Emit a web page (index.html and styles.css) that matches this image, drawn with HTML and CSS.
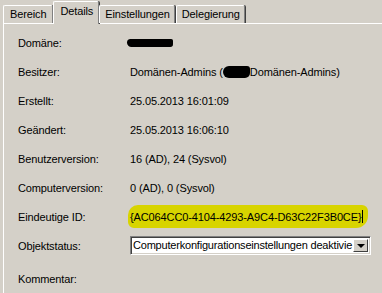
FILE: index.html
```html
<!DOCTYPE html>
<html lang="de">
<head>
    <meta charset="UTF-8">
    <title>Details</title>
    <link rel="stylesheet" href="styles.css">
</head>
<body>
    <div class="tabs">
        <div class="tab tab-first">Bereich</div>
        <div class="tab active">Details</div>
        <div class="tab">Einstellungen</div>
        <div class="tab">Delegierung</div>
    </div>
    <div class="panel">
        <div class="row">
            <span class="label">Domäne:</span>
            <span class="value"><span class="blot blot-domain"></span></span>
        </div>
        <div class="row">
            <span class="label">Besitzer:</span>
            <span class="value">Domänen-Admins (<span class="blot blot-owner"></span>Domänen-Admins)</span>
        </div>
        <div class="row">
            <span class="label">Erstellt:</span>
            <span class="value">25.05.2013 16:01:09</span>
        </div>
        <div class="row">
            <span class="label">Geändert:</span>
            <span class="value">25.05.2013 16:06:10</span>
        </div>
        <div class="row">
            <span class="label">Benutzerversion:</span>
            <span class="value">16 (AD), 24 (Sysvol)</span>
        </div>
        <div class="row">
            <span class="label">Computerversion:</span>
            <span class="value">0 (AD), 0 (Sysvol)</span>
        </div>
        <div class="row">
            <span class="label">Eindeutige ID:</span>
            <span class="value"><span class="marker">{AC064CC0-4104-4293-A9C4-D63C22F3B0CE}<span class="caret"></span></span></span>
        </div>
        <div class="row">
            <span class="label">Objektstatus:</span>
            <span class="value">
                <span class="select">
                    <span class="select-text">Computerkonfigurationseinstellungen deaktivie</span>
                    <span class="select-btn"><span class="arrow"></span></span>
                </span>
            </span>
        </div>
        <div class="row row-last">
            <span class="label">Kommentar:</span>
            <span class="value"></span>
        </div>
    </div>
</body>
</html>
```

FILE: styles.css
```css
body {
    margin: 0;
    background-color: #d4d0c8;
    font-family: Tahoma, "Liberation Sans", Arial, sans-serif;
    font-size: 11px;
    letter-spacing: -0.12px;
    color: #000000;
    height: 293px;
    overflow: hidden;
}
.tabs {
    display: flex;
    align-items: flex-end;
    height: 23px;
    padding-left: 3px;
    position: relative;
    z-index: 1;
}
.tab {
    height: 17px;
    line-height: 16px;
    padding: 0 4px 0 5px;
    border-top: 1px solid #ffffff;
    border-left: 1px solid #ffffff;
    border-right: 1px solid #808080;
    box-shadow: 1px 0 0 #404040;
    border-radius: 2px 2px 0 0;
    margin-right: 1px;
    background-color: #d4d0c8;
}
.tab-first {
    padding: 0 6px 0 6px;
}
.tab.active {
    height: 22px;
    line-height: 18px;
    margin-bottom: -1px;
    margin-left: -1px;
    margin-right: 0;
    padding: 0 5px 0 6px;
}
.panel {
    margin-left: 3px;
    border-top: 1px solid #ffffff;
    border-left: 1px solid #ffffff;
    padding: 4px 0 0 14px;
    height: 270px;
    box-sizing: border-box;
}
.row {
    display: grid;
    grid-template-columns: 112px 1fr;
    align-items: center;
    height: 29px;
}
.row-last {
    margin-top: 4px;
}
.value {
    display: flex;
    align-items: center;
    white-space: nowrap;
}
.blot {
    display: inline-block;
    background-color: #000000;
}
.blot-domain {
    width: 46px;
    height: 8px;
    margin-left: -3px;
    border-radius: 4px 2px 3px 5px;
}
.blot-owner {
    width: 27px;
    height: 12px;
    border-radius: 6px 3px 5px 6px;
}
.marker {
    display: inline-flex;
    align-items: center;
    background-color: #d8d400;
    margin-left: -2px;
    padding: 5px 5px 5px 2px;
    border-radius: 10px 6px 12px 6px;
}
.caret {
    display: inline-block;
    width: 1px;
    height: 13px;
    background-color: #000000;
    margin-left: 1px;
}
.select {
    display: flex;
    width: 241px;
    height: 19px;
    border-top: 1px solid #808080;
    border-left: 1px solid #808080;
    border-right: 1px solid #ffffff;
    border-bottom: 1px solid #ffffff;
    box-shadow: inset 1px 1px 0 #404040, inset -1px -1px 0 #d4d0c8;
    background-color: #ffffff;
    box-sizing: border-box;
}
.select-text {
    flex: 1;
    overflow: hidden;
    white-space: nowrap;
    letter-spacing: -0.2px;
    padding: 2px 0 0 2px;
}
.select-btn {
    width: 15px;
    margin: 2px 2px 2px 0;
    background-color: #d4d0c8;
    border-top: 1px solid #ffffff;
    border-left: 1px solid #ffffff;
    border-right: 1px solid #404040;
    border-bottom: 1px solid #404040;
    box-sizing: border-box;
    display: flex;
    align-items: center;
    justify-content: center;
}
.arrow {
    width: 0;
    height: 0;
    border-left: 4px solid transparent;
    border-right: 4px solid transparent;
    border-top: 4px solid #000000;
}
```
